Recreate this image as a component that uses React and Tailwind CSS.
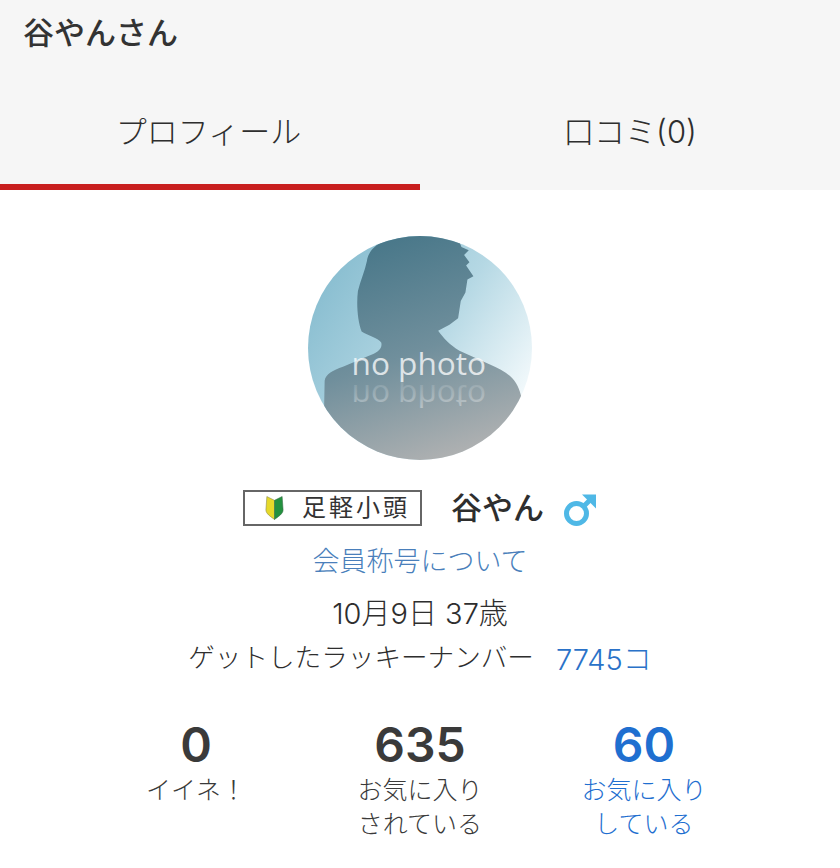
import { useId } from 'react';

const jp = { fontFamily: 'Inter, "Noto Sans CJK JP", sans-serif' };

function NoPhoto() {
  const id = useId();
  return (
    <svg viewBox="55 45 673 673" className="h-[224px] w-[224px]">
      <defs>
        <clipPath id={`${id}c`}>
          <circle cx="391.5" cy="381.5" r="336.5" />
        </clipPath>
        <linearGradient id={`${id}b`} x1="0.05" y1="0.15" x2="0.95" y2="0.75">
          <stop offset="0" stopColor="#86bccf" />
          <stop offset="0.55" stopColor="#b5d8e4" />
          <stop offset="1" stopColor="#f4fafc" />
        </linearGradient>
        <linearGradient id={`${id}s`} x1="0.35" y1="0" x2="0.65" y2="1">
          <stop offset="0" stopColor="#487789" />
          <stop offset="0.5" stopColor="#708f9c" />
          <stop offset="1" stopColor="#b3b3b3" />
        </linearGradient>
        <linearGradient id={`${id}r`} x1="0" y1="0" x2="0" y2="1">
          <stop offset="0" stopColor="#ffffff" stopOpacity="0.45" />
          <stop offset="1" stopColor="#ffffff" stopOpacity="0.05" />
        </linearGradient>
      </defs>
      <g clipPath={`url(#${id}c)`}>
        <rect x="55" y="45" width="673" height="673" fill={`url(#${id}b)`} />
        <path
          fill={`url(#${id}s)`}
          d="M248 85 C270 60 320 40 400 40 L505 50 L516 78 L538 88 L524 102 L540 124 L530 134 L552 166 L534 176 L528 215 L514 240 L506 292 L480 312 L446 330 C462 352 480 372 510 390 L600 430 C650 452 682 470 695 525 L700 730 L100 730 L105 480 C108 460 130 448 160 438 L238 405 C262 395 280 385 275 365 C264 350 235 345 216 332 C204 300 200 250 205 210 C212 180 226 150 232 120 C234 105 240 95 248 85 Z"
        />
        <text
          x="388"
          y="462"
          textAnchor="middle"
          fontSize="95"
          fontFamily="'Open Sans', sans-serif"
          fill="#ffffff"
          fillOpacity="0.75"
        >
          no photo
        </text>
        <text
          x="388"
          y="-492"
          transform="scale(1 -1)"
          textAnchor="middle"
          fontSize="95"
          fontFamily="'Open Sans', sans-serif"
          fill={`url(#${id}r)`}
        >
          no photo
        </text>
      </g>
    </svg>
  );
}

function Shoshinsha() {
  return (
    <svg viewBox="0 0 22 26" className="h-[26px] w-[21px]">
      <path d="M11 5 L3 1 L2 15 C2 19 7 22 11 25 Z" fill="#e6d92a" stroke="#8a8a50" strokeWidth="0.6" />
      <path d="M11 5 L19 1 L20 15 C20 19 15 22 11 25 Z" fill="#23913f" stroke="#3c6e4a" strokeWidth="0.6" />
    </svg>
  );
}

function MaleIcon() {
  return (
    <svg viewBox="0 0 34 34" className="h-[34px] w-[34px]">
      <circle cx="13.5" cy="20.5" r="10" fill="none" stroke="#4fb8e6" strokeWidth="5" />
      <path d="M20.5 13.5 L29 5" fill="none" stroke="#4fb8e6" strokeWidth="5" />
      <path d="M19 1.5 H33 V15.5 Z" fill="#4fb8e6" />
    </svg>
  );
}

const stats = [
  { value: '0', label: ['イイネ！'], blue: false },
  { value: '635', label: ['お気に入り', 'されている'], blue: false },
  { value: '60', label: ['お気に入り', 'している'], blue: true },
];

export default function App() {
  return (
    <div style={jp} className="h-[868px] w-[840px] overflow-hidden bg-white text-[#2e2e2e]">
      <div className="bg-[#f6f6f6]">
        <h1 className="h-[66px] pl-[23px] text-[31px] leading-[66px] font-medium text-[#333]">谷やんさん</h1>
        <div className="flex h-[124px]">
          <div className="flex w-[420px] items-center justify-center border-b-[6px] border-[#c81e1e] pt-[14px] pr-[3px] text-[31px] font-light">
            プロフィール
          </div>
          <div className="flex flex-1 items-center justify-center pt-[8px] text-[31px] font-light">口コミ(0)</div>
        </div>
      </div>

      <div className="flex flex-col items-center pt-[46px]">
        <NoPhoto />

        <div className="mt-[25px] flex h-[46px] items-center">
          <div className="flex h-[36px] w-[179px] items-center border-2 border-[#666] pl-[19px]">
            <Shoshinsha />
            <span className="ml-[17px] text-[24px] tracking-[3px] text-[#333]">足軽小頭</span>
          </div>
          <span className="ml-[29px] text-[31px] font-medium">谷やん</span>
          <span className="mt-[4px] ml-[19px]">
            <MaleIcon />
          </span>
        </div>

        <a className="mt-[9px] text-[27px] leading-[44px] font-light text-[#4a7fbb]">会員称号について</a>
        <p className="mt-[8px] text-[29px] leading-[44px] font-light">10月9日 37歳</p>
        <div className="flex h-[44px] items-center font-light">
          <span className="text-[26.6px]">ゲットしたラッキーナンバー</span>
          <span className="mt-[4px] ml-[22px] text-[29px] text-[#2a72c8]">7745コ</span>
        </div>

        <div className="mt-[38px] grid w-[672px] grid-cols-3 text-center">
          {stats.map((s) => (
            <div key={s.value} className={s.blue ? 'text-[#1f6fd0]' : 'text-[#3a3a3a]'}>
              <div className="h-[54px] text-[48px] leading-[54px] font-semibold">{s.value}</div>
              <div className="pt-[1px] text-[25px] leading-[34px] font-light">
                {s.label.map((l) => (
                  <div key={l}>{l}</div>
                ))}
              </div>
            </div>
          ))}
        </div>
      </div>
    </div>
  );
}
